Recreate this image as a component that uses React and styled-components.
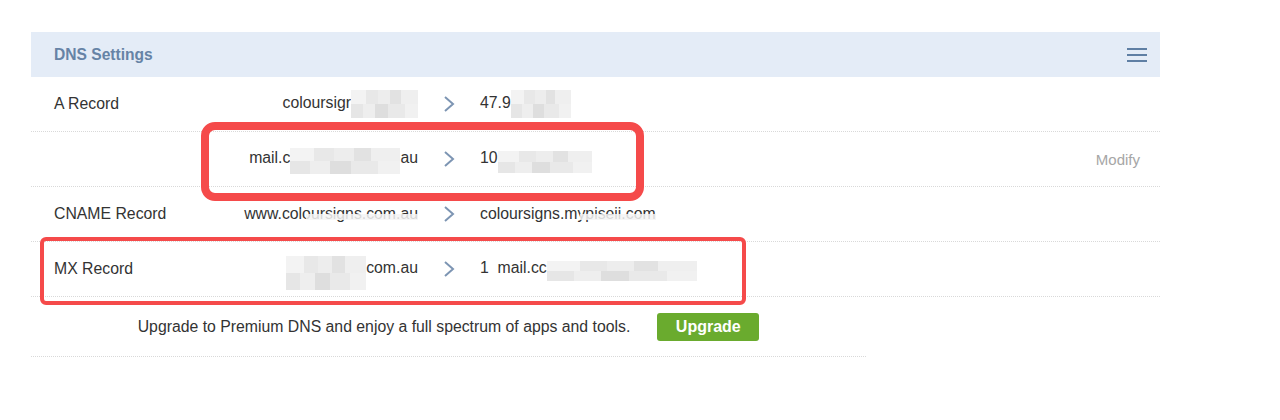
import styled, { createGlobalStyle } from 'styled-components';

const GlobalStyle = createGlobalStyle`
  body {
    margin: 0;
    background: #fff;
    font-family: "Liberation Sans", Arial, sans-serif;
  }
`;

const Page = styled.div`
  position: relative;
  width: 1280px;
  height: 420px;
  padding: 32px 0 0 31px;
  box-sizing: border-box;
`;

const Panel = styled.div`
  width: 1129px;
`;

const Header = styled.div`
  display: flex;
  align-items: center;
  justify-content: space-between;
  height: 45px;
  padding: 0 12px 0 23px;
  background: #e4ecf7;
  .title {
    color: #6683a6;
    font-size: 15.6px;
    font-weight: 700;
  }
`;

const Row = styled.div`
  display: grid;
  grid-template-columns: 150px 214px 62px 1fr auto;
  align-items: center;
  height: 54px;
  padding: 0 20px 0 23px;
  border-bottom: 1px dotted #d9d9d9;
  font-size: 15.8px;
  color: #333;
  .host {
    text-align: right;
    white-space: nowrap;
  }
  .arrow {
    display: flex;
    justify-content: center;
  }
  .value {
    white-space: nowrap;
  }
  .action {
    color: #a6a6a6;
    font-size: 15px;
  }
`;

const Blur = styled.span`
  display: inline-block;
  vertical-align: middle;
  width: ${(p) => p.w}px;
  height: ${(p) => p.h || 26}px;
  margin-top: ${(p) => p.mt || 0}px;
  background:
    linear-gradient(90deg, #f3f3f3 0 22%, #e8e8e8 22% 40%, #ededed 40% 58%, #e2e2e2 58% 74%, #efefef 74% 100%) top / 100% 50% no-repeat,
    linear-gradient(90deg, #e6e6e6 0 18%, #eeeeee 18% 36%, #dedede 36% 55%, #e9e9e9 55% 80%, #f1f1f1 80% 100%) bottom / 100% 50% no-repeat;
`;

const Smudge = styled.span`
  position: relative;
  &::after {
    content: '';
    position: absolute;
    left: ${(p) => p.from}px;
    right: 0;
    top: 55%;
    height: 6px;
    background: rgba(245, 245, 245, 0.85);
  }
`;

const Upgrade = styled.div`
  display: flex;
  justify-content: center;
  align-items: center;
  gap: 27px;
  width: 835px;
  height: 60px;
  padding-top: 1px;
  box-sizing: border-box;
  border-bottom: 1px dotted #d9d9d9;
  font-size: 15.8px;
  color: #333;
  button {
    width: 102px;
    height: 28px;
    border: 0;
    border-radius: 3px;
    background: #6aab2e;
    color: #fff;
    font-family: inherit;
    font-size: 16px;
    font-weight: 700;
  }
`;

const Callout = styled.div`
  position: absolute;
  left: ${(p) => p.x}px;
  top: ${(p) => p.y}px;
  width: ${(p) => p.w}px;
  height: ${(p) => p.h}px;
  box-sizing: border-box;
  border: ${(p) => p.b}px solid #f54a4a;
  border-radius: ${(p) => p.r}px;
  pointer-events: none;
`;

const Chevron = () => (
  <svg width="12" height="18" viewBox="0 0 12 18">
    <polyline points="2,2 10,9 2,16" fill="none" stroke="#7d95b3" strokeWidth="2" />
  </svg>
);

const Menu = () => (
  <svg width="22" height="18" viewBox="0 0 22 18">
    <rect x="1" y="2" width="20" height="2" fill="#5f7fa4" />
    <rect x="1" y="8" width="20" height="2" fill="#5f7fa4" />
    <rect x="1" y="14" width="20" height="2" fill="#5f7fa4" />
  </svg>
);

const App = () => {
  return (
    <Page>
      <GlobalStyle />
      <Panel>
        <Header>
          <span className="title">DNS Settings</span>
          <Menu />
        </Header>
        <Row>
          <span>A Record</span>
          <span className="host">
            coloursigr<Blur w={67} h={28} />
          </span>
          <span className="arrow"><Chevron /></span>
          <span className="value">
            47.9<Blur w={60} h={28} />
          </span>
          <span />
        </Row>
        <Row>
          <span />
          <span className="host">
            mail.c<Blur w={110} h={26} mt={4} />au
          </span>
          <span className="arrow"><Chevron /></span>
          <span className="value">
            10<Blur w={94} h={22} mt={6} />
          </span>
          <span className="action">Modify</span>
        </Row>
        <Row>
          <span>CNAME Record</span>
          <span className="host">
            <Smudge from={62}>www.coloursigns.com.au</Smudge>
          </span>
          <span className="arrow"><Chevron /></span>
          <span className="value">
            <Smudge from={100}>coloursigns.mypiseii.com</Smudge>
          </span>
          <span />
        </Row>
        <Row>
          <span>MX Record</span>
          <span className="host">
            <Blur w={80} h={34} mt={8} />com.au
          </span>
          <span className="arrow"><Chevron /></span>
          <span className="value">
            1&nbsp;&nbsp;mail.cc<Blur w={150} h={20} mt={4} />
          </span>
          <span />
        </Row>
        <Upgrade>
          <span>Upgrade to Premium DNS and enjoy a full spectrum of apps and tools.</span>
          <button>Upgrade</button>
        </Upgrade>
      </Panel>
      <Callout x={201} y={122} w={443} h={79} b={8} r={14} />
      <Callout x={40} y={237} w={706} h={68} b={4} r={6} />
    </Page>
  );
};

export default App;
